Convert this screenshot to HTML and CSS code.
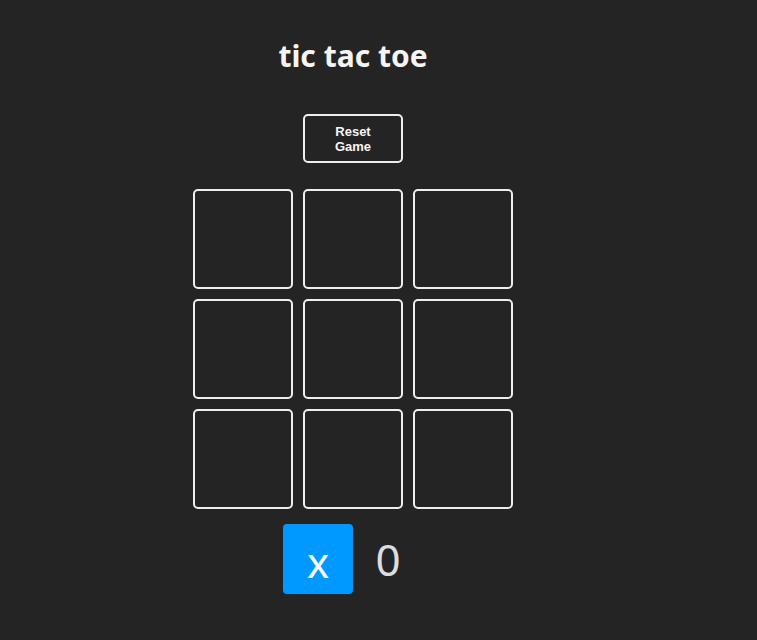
FILE: index.html
```html
<!DOCTYPE html>
<html>
<head>
<meta charset="utf-8">
<link rel="stylesheet" href="styles.css">
</head>
<body>
<div class="app">
  <h1 class="title">tic tac toe</h1>
  <button class="reset">Reset Game</button>
  <div class="board">
    <div class="cell"></div><div class="cell"></div><div class="cell"></div>
    <div class="cell"></div><div class="cell"></div><div class="cell"></div>
    <div class="cell"></div><div class="cell"></div><div class="cell"></div>
  </div>
  <div class="turn">
    <div class="player">x</div>
    <div class="score">0</div>
  </div>
</div>
</body>
</html>
```
FILE: styles.css
```css
html, body {
  margin: 0;
  padding: 0;
  background: #242424;
}
body {
  font-family: "Noto Sans", "Open Sans", sans-serif;
  color: #f0f0f0;
}
.app {
  width: 706px;
  display: flex;
  flex-direction: column;
  align-items: center;
  padding-top: 35px;
}
.title {
  margin: 0;
  font-size: 30px;
  font-weight: 700;
  line-height: 42px;
  color: #f5f5f5;
}
.reset {
  margin-top: 37px;
  width: 100px;
  height: 49px;
  background: transparent;
  border: 2px solid #eeeeee;
  border-radius: 5px;
  color: #f5f5f5;
  font-family: "Liberation Sans", Arial, sans-serif;
  font-weight: 700;
  font-size: 13px;
  line-height: 15px;
  padding: 0 20px;
}
.board {
  margin-top: 26px;
  display: grid;
  grid-template-columns: repeat(3, 100px);
  grid-auto-rows: 100px;
  gap: 10px;
}
.cell {
  border: 2px solid #eeeeee;
  border-radius: 5px;
}
.turn {
  margin-top: 15px;
  display: flex;
}
.player {
  width: 70px;
  height: 70px;
  background: #0099ff;
  border-radius: 4px;
  color: #ffffff;
  font-size: 42px;
  display: flex;
  align-items: center;
  justify-content: center;
  line-height: 1;
  padding-top: 6px;
  box-sizing: border-box;
}
.score {
  width: 70px;
  height: 70px;
  color: #dddddd;
  font-size: 44px;
  display: flex;
  align-items: center;
  justify-content: center;
  line-height: 1;
}
```
